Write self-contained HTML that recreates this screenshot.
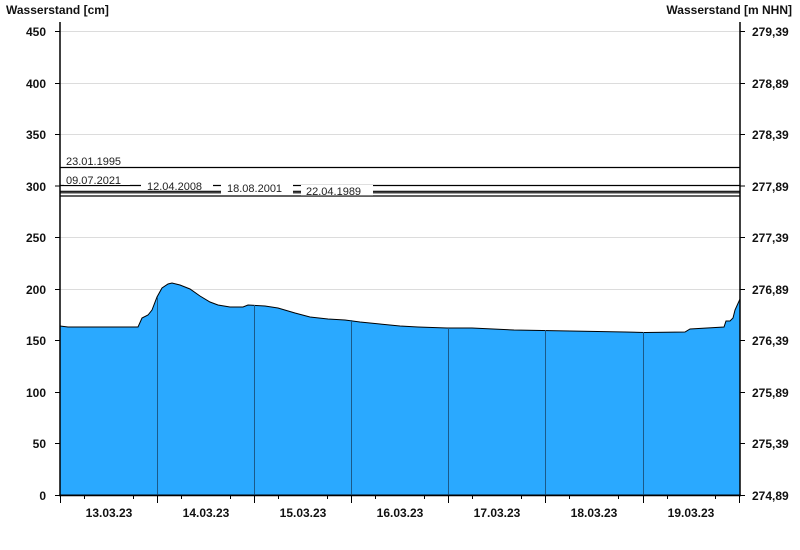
<!DOCTYPE html>
<html><head><meta charset="utf-8"><style>
html,body{margin:0;padding:0;background:#fff;}
svg{display:block;font-family:"Liberation Sans",Arial,sans-serif;}
.b{font-weight:bold;font-size:12px;fill:#111;}
.s{font-size:11px;fill:#222;}
</style></head><body>
<svg width="800" height="550" viewBox="0 0 800 550" xmlns="http://www.w3.org/2000/svg">
<text class="b" x="6" y="14">Wasserstand [cm]</text>
<text class="b" x="792" y="14" text-anchor="end">Wasserstand [m NHN]</text>
<g stroke="#dcdcdc" stroke-width="1">
<line x1="60" y1="31.5" x2="740" y2="31.5"/><line x1="60" y1="83.5" x2="740" y2="83.5"/>
<line x1="60" y1="134.5" x2="740" y2="134.5"/><line x1="60" y1="237.5" x2="740" y2="237.5"/>
<line x1="60" y1="289.5" x2="740" y2="289.5"/><line x1="60" y1="340.5" x2="740" y2="340.5"/>
<line x1="60" y1="392.5" x2="740" y2="392.5"/><line x1="60" y1="443.5" x2="740" y2="443.5"/>
</g>
<path fill="#2aa9ff" stroke="#000" stroke-width="1" d="M60,326 L68,327 L138,327 L142,318 L148,315 L152,310 L157,297 L162,288 L168,284 L172,283 L180,285 L190,289 L200,296 L210,302 L218,305 L230,307 L243,307 L248,305 L265,306 L278,308 L295,313 L310,317 L328,319 L345,320 L360,322 L380,324 L400,326 L418,327 L447,328 L472,328 L514,330 L570,331 L625,332 L645,332.5 L685,332 L690,329 L724,327 L726,321 L730,321 L733,318 L735,310 L740,299 L740,495 L60,495 Z"/>
<g stroke="#1a5a8a" stroke-width="1">
<line x1="157.5" y1="297" x2="157.5" y2="495"/><line x1="254.5" y1="305" x2="254.5" y2="495"/>
<line x1="351.5" y1="320" x2="351.5" y2="495"/><line x1="448.5" y1="328" x2="448.5" y2="495"/>
<line x1="545.5" y1="330" x2="545.5" y2="495"/><line x1="643.5" y1="332" x2="643.5" y2="495"/>
</g>
<g stroke="#000" stroke-width="1.2">
<line x1="60" y1="167.5" x2="740" y2="167.5"/>
<line x1="60" y1="185.5" x2="740" y2="185.5"/>
<line x1="60" y1="191.3" x2="740" y2="191.3"/>
<line x1="60" y1="192.8" x2="740" y2="192.8"/>
<line x1="60" y1="196" x2="740" y2="196"/>
</g>
<g fill="#fff">
<rect x="141" y="179" width="72" height="11.5"/>
<rect x="221" y="181" width="72" height="13"/>
<rect x="301" y="185" width="72" height="10.5"/>
<rect x="64" y="174" width="66" height="11"/>
</g>
<text class="s" x="66" y="165">23.01.1995</text>
<text class="s" x="66" y="184">09.07.2021</text>
<text class="s" x="147" y="190">12.04.2008</text>
<text class="s" x="227" y="192">18.08.2001</text>
<text class="s" x="306" y="195">22.04.1989</text>
<g stroke="#000" stroke-width="1.5">
<line x1="60" y1="22" x2="60" y2="496"/><line x1="740" y1="22" x2="740" y2="496"/>
<line x1="59" y1="495.5" x2="741" y2="495.5"/>
</g>
<g stroke="#000" stroke-width="1">
<path d="M55,31.5h5M55,83.5h5M55,134.5h5M55,186h5M55,237.5h5M55,289.5h5M55,340.5h5M55,392.5h5M55,443.5h5M55,495.5h5"/>
<path d="M740,31.5h5M740,83.5h5M740,134.5h5M740,186h5M740,237.5h5M740,289.5h5M740,340.5h5M740,392.5h5M740,443.5h5M740,495.5h5"/>
<path d="M60.5,495v8M157.5,495v8M254.5,495v8M351.5,495v8M448.5,495v8M545.5,495v8M643.5,495v8M739.5,495v8"/>
<path d="M84.5,495v4M133.5,495v4M181.5,495v4M230.5,495v4M278.5,495v4M327.5,495v4M375.5,495v4M424.5,495v4M472.5,495v4M521.5,495v4M569.5,495v4M618.5,495v4M667.5,495v4M715.5,495v4"/>
</g>
<g class="b" text-anchor="end">
<text x="46" y="36">450</text><text x="46" y="88">400</text><text x="46" y="139">350</text>
<text x="46" y="191">300</text><text x="46" y="242">250</text><text x="46" y="294">200</text>
<text x="46" y="345">150</text><text x="46" y="397">100</text><text x="46" y="448">50</text><text x="46" y="500">0</text>
</g>
<g class="b">
<text x="752" y="36">279,39</text><text x="752" y="88">278,89</text><text x="752" y="139">278,39</text>
<text x="752" y="191">277,89</text><text x="752" y="242">277,39</text><text x="752" y="294">276,89</text>
<text x="752" y="345">276,39</text><text x="752" y="397">275,89</text><text x="752" y="448">275,39</text><text x="752" y="500">274,89</text>
</g>
<g class="b" text-anchor="middle">
<text x="109" y="517">13.03.23</text><text x="206" y="517">14.03.23</text><text x="303" y="517">15.03.23</text>
<text x="400" y="517">16.03.23</text><text x="497" y="517">17.03.23</text><text x="594" y="517">18.03.23</text>
<text x="691" y="517">19.03.23</text>
</g>
</svg>
</body></html>
